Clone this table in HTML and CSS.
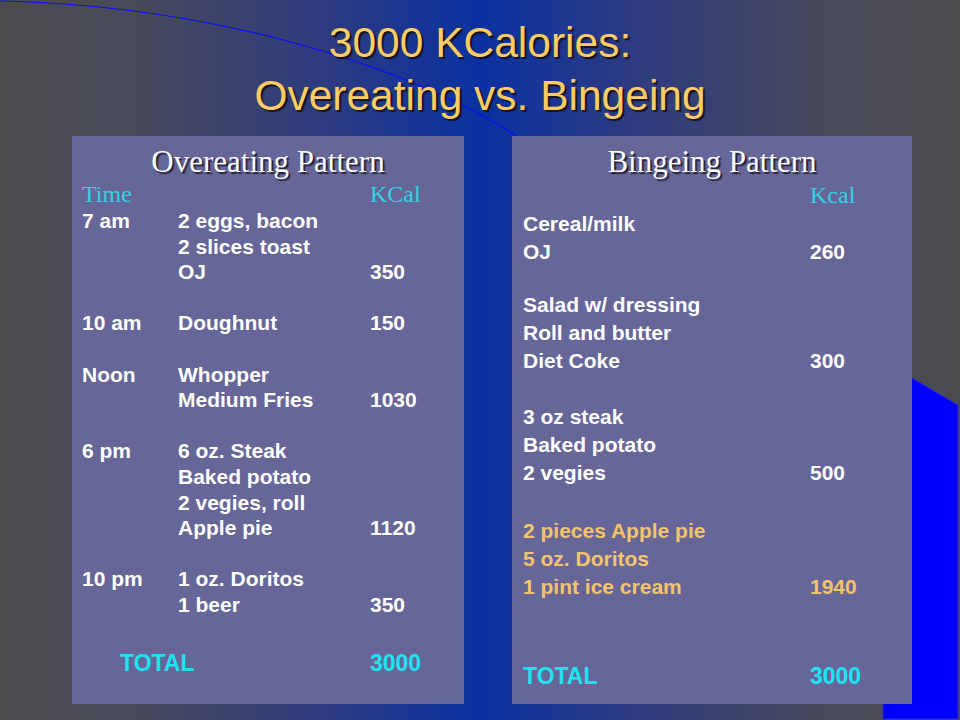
FILE: index.html
```html
<!DOCTYPE html>
<html lang="en">
<head>
<meta charset="utf-8">
<title>3000 KCalories: Overeating vs. Bingeing</title>
<link rel="stylesheet" href="styles.css">
</head>
<body>
<div class="slide">
  <svg class="deco" width="960" height="720" viewBox="0 0 960 720" aria-hidden="true">
    <path d="M0 1 C 200 5 400 60 520 138" fill="none" stroke="#0a0aff" stroke-width="1.2"/>
    <polygon points="883,361 958,405 958,719 883,719" fill="#0000ff" stroke="#2a2ad8" stroke-width="1"/>
  </svg>

  <h1 class="title">
    <span>3000 KCalories:</span>
    <span>Overeating vs. Bingeing</span>
  </h1>

  <div class="panels">
    <section class="panel panel-left">
      <h2 class="panel-title">Overeating Pattern</h2>
      <div class="grid-left head-row">
        <span>Time</span><span></span><span>KCal</span>
      </div>
      <div class="rows rows-left">
        <div class="grid-left row"><span>7 am</span><span>2 eggs, bacon</span><span></span></div>
        <div class="grid-left row"><span></span><span>2 slices toast</span><span></span></div>
        <div class="grid-left row"><span></span><span>OJ</span><span>350</span></div>
        <div class="row blank"></div>
        <div class="grid-left row"><span>10 am</span><span>Doughnut</span><span>150</span></div>
        <div class="row blank"></div>
        <div class="grid-left row"><span>Noon</span><span>Whopper</span><span></span></div>
        <div class="grid-left row"><span></span><span>Medium Fries</span><span>1030</span></div>
        <div class="row blank"></div>
        <div class="grid-left row"><span>6 pm</span><span>6 oz. Steak</span><span></span></div>
        <div class="grid-left row"><span></span><span>Baked potato</span><span></span></div>
        <div class="grid-left row"><span></span><span>2 vegies, roll</span><span></span></div>
        <div class="grid-left row"><span></span><span>Apple pie</span><span>1120</span></div>
        <div class="row blank"></div>
        <div class="grid-left row"><span>10 pm</span><span>1 oz. Doritos</span><span></span></div>
        <div class="grid-left row"><span></span><span>1 beer</span><span>350</span></div>
      </div>
      <div class="total total-left"><span class="total-label">TOTAL</span><span>3000</span></div>
    </section>

    <section class="panel panel-right">
      <h2 class="panel-title">Bingeing Pattern</h2>
      <div class="grid-right head-row head-right">
        <span></span><span>Kcal</span>
      </div>
      <div class="rows rows-right">
        <div class="grid-right row"><span>Cereal/milk</span><span></span></div>
        <div class="grid-right row"><span>OJ</span><span>260</span></div>
        <div class="row blank blank-short"></div>
        <div class="grid-right row"><span>Salad w/ dressing</span><span></span></div>
        <div class="grid-right row"><span>Roll and butter</span><span></span></div>
        <div class="grid-right row"><span>Diet Coke</span><span>300</span></div>
        <div class="row blank"></div>
        <div class="grid-right row"><span>3 oz steak</span><span></span></div>
        <div class="grid-right row"><span>Baked potato</span><span></span></div>
        <div class="grid-right row"><span>2 vegies</span><span>500</span></div>
        <div class="row blank blank-tall"></div>
        <div class="grid-right row gold"><span>2 pieces Apple pie</span><span></span></div>
        <div class="grid-right row gold"><span>5 oz. Doritos</span><span></span></div>
        <div class="grid-right row gold"><span>1 pint ice cream</span><span>1940</span></div>
      </div>
      <div class="total total-right"><span>TOTAL</span><span>3000</span></div>
    </section>
  </div>
</div>
</body>
</html>
```

FILE: styles.css
```css
html, body {
  margin: 0;
  padding: 0;
}

body {
  width: 960px;
  height: 720px;
  overflow: hidden;
  background: linear-gradient(to right,
    #4b4b4d 0%,
    #484a5a 14%,
    #2d3b80 34%,
    #0a31a2 50%,
    #2d3b80 66%,
    #484a5a 86%,
    #4b4b4d 100%);
  font-family: "Liberation Sans", Arial, sans-serif;
}

.slide {
  position: relative;
  width: 960px;
  height: 720px;
}

.deco {
  position: absolute;
  left: 0;
  top: 0;
  z-index: 0;
}

.title {
  position: relative;
  z-index: 1;
  margin: 0;
  padding-top: 16px;
  font-weight: normal;
  font-size: 42.5px;
  line-height: 53px;
  color: #ffcc66;
  text-align: center;
  text-shadow: 2px 2px 1px #141420;
}

.title span {
  display: block;
}

.panels {
  position: relative;
  z-index: 1;
  display: flex;
  gap: 48px;
  margin-top: 14px;
  padding-left: 72px;
}

.panel {
  box-sizing: border-box;
  height: 568px;
  background: #666699;
  padding-top: 8px;
  color: #ffffff;
}

.panel-left {
  width: 392px;
}

.panel-right {
  width: 400px;
}

.panel-title {
  margin: 0;
  font-family: "Liberation Serif", "Times New Roman", serif;
  font-weight: normal;
  font-size: 31px;
  line-height: 36px;
  text-align: center;
  color: #ffffff;
  text-shadow: 2px 2px 1px #22223a;
}

.grid-left {
  display: grid;
  grid-template-columns: 96px 192px auto;
  padding-left: 10px;
}

.grid-right {
  display: grid;
  grid-template-columns: 287px auto;
  padding-left: 11px;
}

.head-row {
  font-family: "Liberation Serif", "Times New Roman", serif;
  font-size: 24px;
  line-height: 28px;
  color: #33d3e3;
}

.head-right {
  line-height: 30px;
}

.row {
  font-weight: bold;
  font-size: 21px;
}

.rows-left .row {
  height: 25.6px;
  line-height: 25.6px;
}

.rows-right .row {
  height: 28px;
  line-height: 28px;
}

.rows-right .blank-short {
  height: 25px;
}

.rows-right .blank-tall {
  height: 30px;
}

.gold {
  color: #f4c46c;
}

.total {
  display: grid;
  font-weight: bold;
  font-size: 23px;
  line-height: 28px;
  color: #1ee4f2;
}

.total-left {
  grid-template-columns: 288px auto;
  padding-left: 10px;
  margin-top: 31px;
}

.total-left .total-label {
  padding-left: 38px;
}

.total-right {
  grid-template-columns: 287px auto;
  padding-left: 11px;
  margin-top: 61px;
}
```
